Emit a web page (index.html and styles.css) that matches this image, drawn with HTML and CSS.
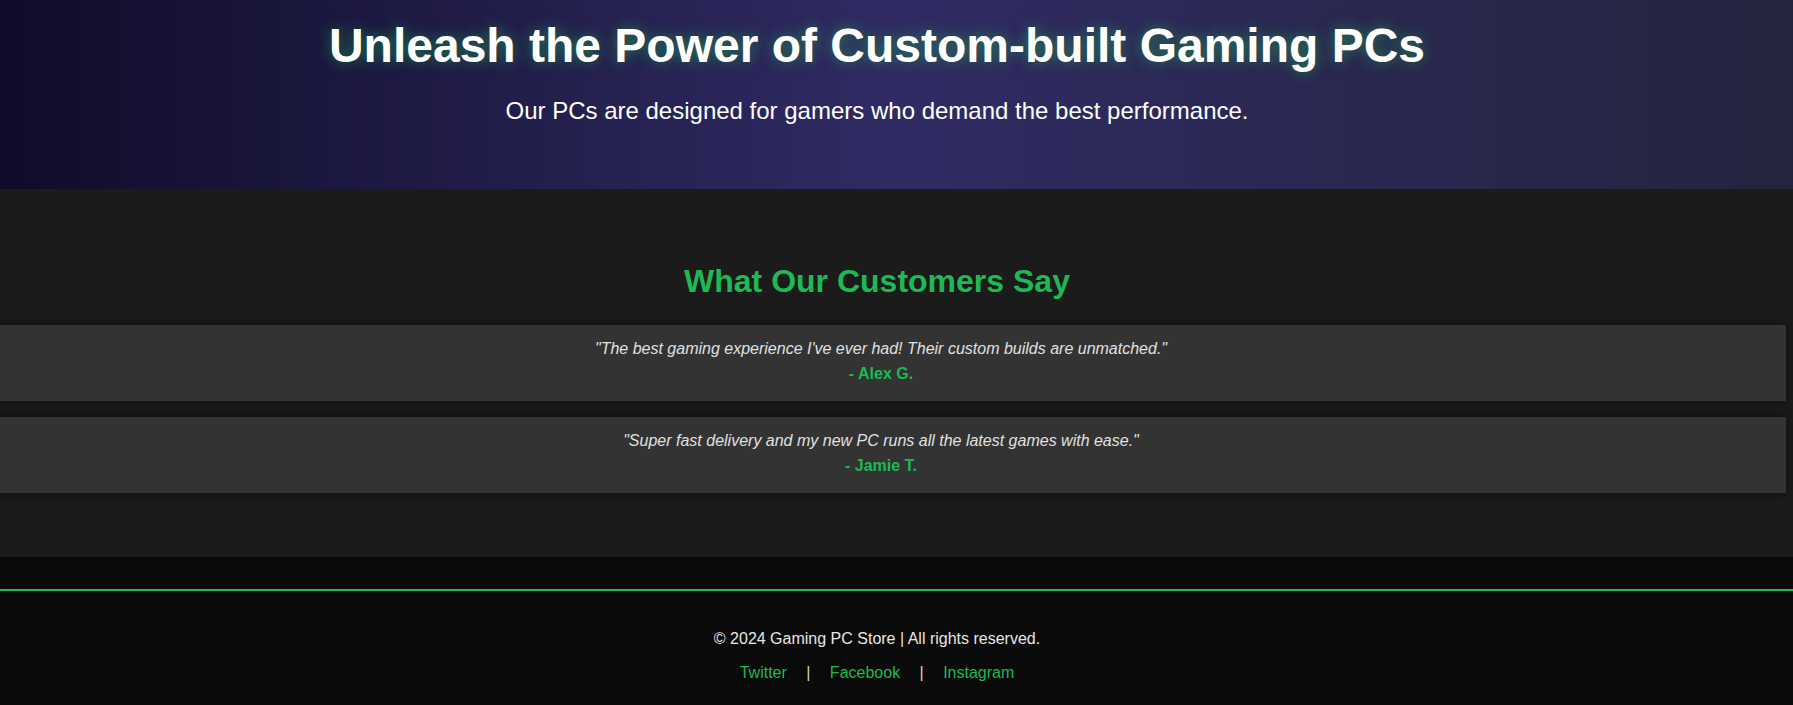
FILE: index.html
```html
<!DOCTYPE html>
<html lang="en">
<head>
<meta charset="utf-8">
<title>Gaming PC Store</title>
<link rel="stylesheet" href="styles.css">
</head>
<body>
<header class="hero">
  <div class="hero-inner">
    <h1 class="hero-title">Unleash the Power of Custom-built Gaming PCs</h1>
    <p class="hero-sub">Our PCs are designed for gamers who demand the best performance.</p>
  </div>
</header>
<section class="testimonials">
  <h2 class="section-title">What Our Customers Say</h2>
  <div class="cards">
    <div class="card">
      <p class="quote">"The best gaming experience I've ever had! Their custom builds are unmatched."</p>
      <p class="author">- Alex G.</p>
    </div>
    <div class="card">
      <p class="quote">"Super fast delivery and my new PC runs all the latest games with ease."</p>
      <p class="author">- Jamie T.</p>
    </div>
  </div>
</section>
<footer class="footer">
  <div class="footer-inner">
    <p class="copy">&copy; 2024 Gaming PC Store | All rights reserved.</p>
    <p class="links"><a href="#">Twitter</a> | <a href="#">Facebook</a> | <a href="#">Instagram</a></p>
  </div>
</footer>
</body>
</html>
```

FILE: styles.css
```css
* { box-sizing: border-box; }

html, body {
  margin: 0;
  padding: 0;
}

body {
  background: #0a0a0a;
  color: #f0f0f0;
  font-family: "Liberation Sans", Arial, sans-serif;
  overflow-x: hidden;
}

.hero {
  background: linear-gradient(to right, #0f0c29, #302b63, #24243e);
  padding: 18px 0 0;
  height: 189px;
}

.hero-inner {
  margin-right: 39px;
  text-align: center;
}

.hero-title {
  margin: 0 0 24px;
  font-size: 48px;
  font-weight: bold;
  line-height: normal;
  color: #ffffff;
  text-shadow: 0 0 14px rgba(29, 185, 84, 0.6);
}

.hero-sub {
  margin: 0;
  font-size: 24px;
  line-height: normal;
  color: #ffffff;
}

.testimonials {
  background: #1b1b1b;
  padding: 74px 0 64px;
  margin-bottom: 32px;
}

.section-title {
  margin: 0 39px 25px 0;
  text-align: center;
  font-size: 32px;
  font-weight: bold;
  line-height: 37px;
  color: #1db954;
}

.cards {
  display: flex;
  flex-direction: column;
  gap: 16px;
  margin: 0 7px 0 -24px;
}

.card {
  background: #333333;
  height: 76px;
  padding: 15px 20px 0;
  text-align: center;
  box-shadow: 0 0 10px rgba(0, 0, 0, 0.55);
}

.quote {
  margin: 0 0 7px;
  font-size: 16px;
  font-style: italic;
  line-height: normal;
  color: #e0e0e0;
}

.author {
  margin: 0;
  font-size: 16px;
  font-weight: bold;
  line-height: normal;
  color: #1db954;
}

.footer {
  border-top: 2px solid #1db954;
  background: #0a0a0a;
  padding: 23px 0 20px;
}

.footer-inner {
  margin-right: 39px;
  text-align: center;
}

.copy, .links {
  margin: 16px 0;
  font-size: 16px;
  line-height: normal;
  color: #e6e6e6;
}

.links {
  color: #d8d2c8;
}

.links a {
  color: #1db954;
  text-decoration: none;
  margin: 0 15px;
}
```
